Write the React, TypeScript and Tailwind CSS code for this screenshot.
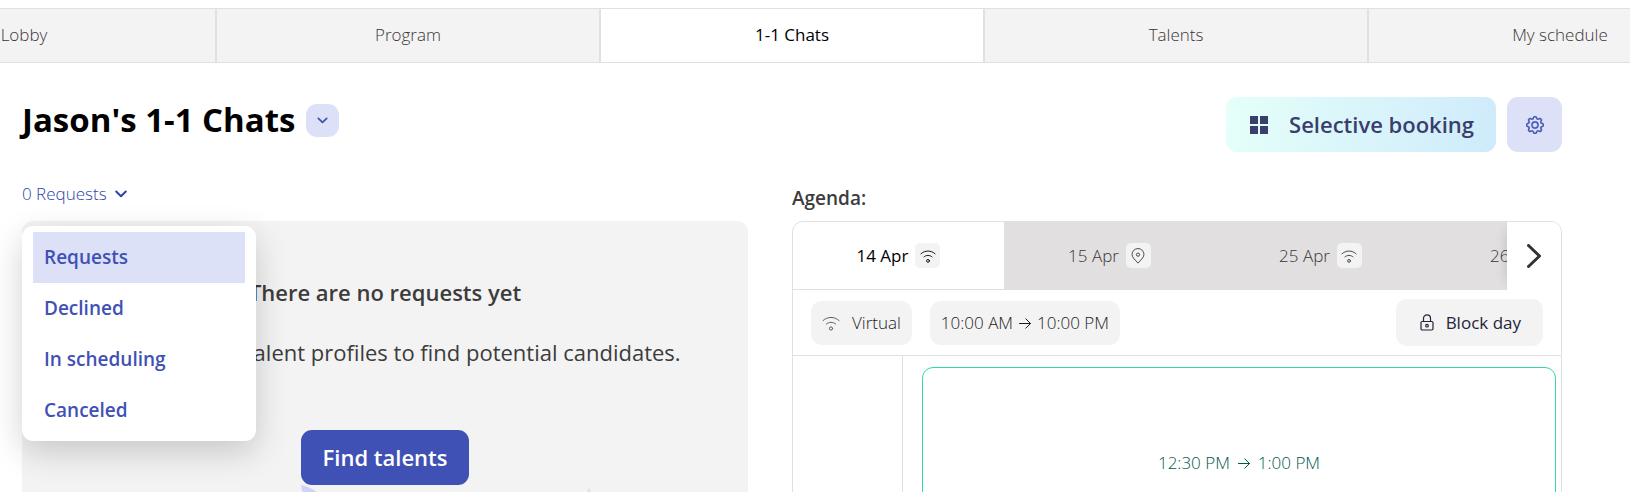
import React from 'react';

const tabs = ['Lobby', 'Program', '1-1 Chats', 'Talents', 'My schedule'];
const requestTypes = ['Requests', 'Declined', 'In scheduling', 'Canceled'];

const days = [
  { label: '14 Apr', virtual: true },
  { label: '15 Apr', virtual: false },
  { label: '25 Apr', virtual: true },
  { label: '26 Apr', virtual: true },
];

type IconProps = { className?: string };

const WifiIcon: React.FC<IconProps> = ({ className }) => (
  <svg viewBox="0 0 18 18" className={className} fill="none" stroke="currentColor" strokeLinecap="round">
    <path d="M1 6.600C5.500 2.300 12.500 2.300 17 6.600" />
    <path d="M4.400 10C7.200 7.700 10.800 7.700 13.600 10" />
    <circle cx="9" cy="14.500" r="1.600" />
  </svg>
);

const PinIcon: React.FC<IconProps> = ({ className }) => (
  <svg viewBox="0 0 18 18" className={className} fill="none" stroke="currentColor" strokeLinejoin="round">
    <path d="M9 17C6.500 14 2.300 10.800 2.300 7.300a6.700 6.700 0 0 1 13.400 0c0 3.500-4.200 6.700-6.700 9.700z" />
    <circle cx="9" cy="7.500" r="1.800" />
  </svg>
);

const ChevronIcon: React.FC<IconProps> = ({ className }) => (
  <svg viewBox="0 0 12 8" className={className} fill="none" stroke="currentColor" strokeWidth="2" strokeLinecap="round" strokeLinejoin="round">
    <path d="M1.200 1.500L6 6.200l4.800-4.700" />
  </svg>
);

const ArrowIcon: React.FC<IconProps> = ({ className }) => (
  <svg viewBox="0 0 12 12" className={className} fill="none" stroke="currentColor" strokeLinecap="round" strokeLinejoin="round">
    <path d="M.5 6.500h11M6.800 1.800L11.500 6.500l-4.700 4.700" />
  </svg>
);

const GridIcon: React.FC<IconProps> = ({ className }) => (
  <svg viewBox="0 0 18 18" className={className} fill="currentColor">
    <path d="M0 0h8v8H0zM10 0h8v8h-8zM0 10h8v8H0zM10 10h8v8h-8z" />
  </svg>
);

const GearIcon: React.FC<IconProps> = ({ className }) => (
  <svg viewBox="0 0 16 16" className={className} fill="currentColor" stroke="currentColor" strokeWidth=".4">
    <path d="M8 4.754a3.246 3.246 0 1 0 0 6.492 3.246 3.246 0 0 0 0-6.492M5.754 8a2.246 2.246 0 1 1 4.492 0 2.246 2.246 0 0 1-4.492 0" />
    <path d="M9.796 1.343c-.527-1.790-3.065-1.790-3.592 0l-.094.319a.873.873 0 0 1-1.255.52l-.292-.16c-1.640-.892-3.433.902-2.540 2.541l.159.292a.873.873 0 0 1-.52 1.255l-.319.094c-1.790.527-1.790 3.065 0 3.592l.319.094a.873.873 0 0 1 .52 1.255l-.16.292c-.892 1.640.901 3.434 2.541 2.540l.292-.159a.873.873 0 0 1 1.255.52l.094.319c.527 1.790 3.065 1.790 3.592 0l.094-.319a.873.873 0 0 1 1.255-.52l.292.16c1.640.893 3.434-.902 2.540-2.541l-.159-.292a.873.873 0 0 1 .52-1.255l.319-.094c1.790-.527 1.790-3.065 0-3.592l-.319-.094a.873.873 0 0 1-.52-1.255l.16-.292c.893-1.640-.902-3.433-2.541-2.540l-.292.159a.873.873 0 0 1-1.255-.52zm-2.633.283c.246-.835 1.428-.835 1.674 0l.094.319a1.873 1.873 0 0 0 2.693 1.115l.291-.16c.764-.415 1.600.42 1.184 1.185l-.159.292a1.873 1.873 0 0 0 1.116 2.692l.318.094c.835.246.835 1.428 0 1.674l-.319.094a1.873 1.873 0 0 0-1.115 2.693l.16.291c.415.764-.42 1.600-1.185 1.184l-.291-.159a1.873 1.873 0 0 0-2.693 1.116l-.094.318c-.246.835-1.428.835-1.674 0l-.094-.319a1.873 1.873 0 0 0-2.692-1.115l-.292.16c-.764.415-1.600-.42-1.184-1.185l.159-.291A1.873 1.873 0 0 0 1.945 8.930l-.319-.094c-.835-.246-.835-1.428 0-1.674l.319-.094A1.873 1.873 0 0 0 3.060 4.377l-.16-.292c-.415-.764.42-1.600 1.185-1.184l.292.159a1.873 1.873 0 0 0 2.692-1.115z" />
  </svg>
);

const LockIcon: React.FC<IconProps> = ({ className }) => (
  <svg viewBox="0 0 14 17" className={className} fill="none" stroke="currentColor" strokeWidth="1.200">
    <rect x="1" y="7.500" width="12" height="8.500" rx="1.200" />
    <path d="M3.500 7.500V4.300a3.500 3.500 0 0 1 7 0v3.200" />
    <circle cx="7" cy="11.700" r="1.300" />
  </svg>
);

const Requests: React.FC = () => (
  <section className="relative pr-11">
    <button type="button" aria-expanded="true" className="flex h-[22px] items-center gap-2 text-[17px] font-light text-[#3043a8]">
      0 Requests
      <ChevronIcon className="h-2 w-3" />
    </button>

    {/* Type filter */}
    <ul className="absolute left-0 top-[43px] z-10 w-[234px] rounded-[11px] bg-white px-[11px] pb-[5px] pt-[6px] shadow-[0_11px_33px_rgba(0,0,0,0.18)]">
      {requestTypes.map((type, i) => (
        <li key={type}>
          <button
            type="button"
            className={`h-[51px] w-full px-[11px] text-left text-[19px] font-semibold text-[#3f51b5] ${i === 0 ? 'bg-[#dde1f8]' : ''}`}
          >
            {type}
          </button>
        </li>
      ))}
    </ul>

    <div className="mt-4 flex flex-col items-center rounded-[11px] bg-[#f3f3f3] pt-[55px] text-[22px] leading-[33px] text-[#3c3c3c]">
      <h2 className="font-semibold">There are no requests yet</h2>
      <p className="mt-[27px]">Check out new talent profiles to find potential candidates.</p>
      <a href="#talents" className="mt-[61px] flex h-[55px] items-center rounded-[11px] bg-[#3f51b5] px-[22px] font-semibold text-white">
        Find talents
      </a>
      <svg viewBox="0 0 440 160" className="h-40 w-[440px]">
        <path d="M136 0c8 1 20 9 34 20v30C154 38 138 18 136 0z" fill="#cfd3f6" />
        <path d="M424 2l3 8 8 3-8 3-3 8-3-8-8-3 8-3z" fill="#dde1f8" />
      </svg>
    </div>
  </section>
);

const Agenda: React.FC = () => (
  <section>
    <h2 className="flex h-[30px] items-center text-[19px] font-semibold text-[#3c3c3c]">Agenda:</h2>

    <div className="mt-2 overflow-hidden rounded-[11px] border border-[#e0e0e0]">
      {/* Days */}
      <div className="flex h-[68px] overflow-hidden">
        <div className="flex flex-1 overflow-hidden">
          {days.map((day, i) => (
            <button
              key={day.label}
              type="button"
              className={`flex w-[211px] shrink-0 items-center justify-center gap-[7px] border-b border-[#e0e0e0] text-[17px] ${
                i === 0 ? 'text-black' : 'bg-[#e1dfe0] font-light text-[#3a3637]'
              }`}
            >
              {day.label}
              <span className="flex size-[25px] items-center justify-center rounded-[5px] bg-[#f3f3f3]">
                {day.virtual ? <WifiIcon className="size-4" /> : <PinIcon className="size-4" />}
              </span>
            </button>
          ))}
        </div>
        <button
          type="button"
          aria-label="Next days"
          className="flex w-[54px] items-center justify-center bg-white text-[#333] shadow-[-8px_0_11px_-8px_rgba(0,0,0,0.15)]"
        >
          <svg viewBox="0 0 14 24" className="h-6 w-[14px]" fill="none" stroke="currentColor" strokeWidth="3" strokeLinecap="round" strokeLinejoin="round">
            <path d="M1.500 1.500L12.500 12l-11 10.500" />
          </svg>
        </button>
      </div>

      {/* Day details */}
      <div className="flex h-[66px] items-center gap-[18px] border-b border-[#e0e0e0] px-[18px] text-[17px] text-[#1c1c1c]">
        <div className="flex h-11 items-center gap-3 rounded-[11px] bg-[#f3f3f3] px-[11px] font-light">
          <WifiIcon className="size-[18px] text-[#5c5c5c]" />
          Virtual
        </div>
        <div className="flex h-11 items-center gap-1.5 rounded-[11px] bg-[#f3f3f3] px-[11px] font-light">
          10:00 AM
          <ArrowIcon className="size-3" />
          10:00 PM
        </div>
        <button type="button" className="ml-auto flex h-[47px] items-center gap-3 rounded-[11px] bg-[#f3f3f3] pl-6 pr-[22px] font-medium text-[#24243a]">
          <LockIcon className="h-[17px] w-[14px]" />
          Block day
        </button>
      </div>

      {/* Slots */}
      <div className="flex h-[480px]">
        <div className="w-[110px] border-r border-[#e0e0e0]" />
        <div className="flex-1 pl-[19px] pr-[5px] pt-[11px]">
          <div className="flex h-[192px] items-center justify-center gap-2 rounded-[11px] border border-[#34d9a8] text-[17px] font-light text-[#00594a]">
            12:30 PM
            <ArrowIcon className="size-3" />
            1:00 PM
          </div>
        </div>
      </div>
    </div>
  </section>
);

const App: React.FC = () => {
  return (
    <div className="h-screen overflow-hidden bg-white pt-2 font-['Open_Sans',sans-serif]">
      <nav className="flex justify-center overflow-hidden border-y border-[#e0e0e0] bg-[#f3f3f3] pr-[46px]">
        {tabs.map((tab) => (
          <a
            key={tab}
            href="#"
            className={`flex h-[53px] w-96 shrink-0 items-center justify-center border-x border-[#e0e0e0] pb-0.5 text-[17px] ${
              tab === '1-1 Chats' ? 'bg-white font-medium text-black' : 'font-light text-[#3a3637]'
            }`}
          >
            {tab}
          </a>
        ))}
      </nav>

      <main className="pl-[22px] pr-[68px] pt-[34px]">
        <header className="flex items-start justify-between">
          <div className="flex h-[47px] items-center gap-[11px]">
            <h1 className="pb-0.5 text-[33px] font-bold text-black">Jason's 1-1 Chats</h1>
            <button type="button" aria-label="Switch calendar" className="flex size-[33px] items-center justify-center rounded-[11px] bg-[#dde1f8] text-[#3f51b5]">
              <ChevronIcon className="h-[7px] w-[11px]" />
            </button>
          </div>
          <div className="flex gap-[11px]">
            <button
              type="button"
              className="flex h-[55px] items-center gap-[21px] rounded-[11px] bg-linear-100 from-[#e5fff9] to-[#cfebfb] pl-6 pr-[22px] text-[22px] font-semibold text-[#3a3e6c]"
            >
              <GridIcon className="size-[18px]" />
              Selective booking
            </button>
            <button type="button" aria-label="Settings" className="flex size-[55px] items-center justify-center rounded-[11px] bg-[#dde1f8] text-[#3f51b5]">
              <GearIcon className="size-[18px]" />
            </button>
          </div>
        </header>

        <div className="mt-[31px] grid grid-cols-2">
          <Requests />
          <Agenda />
        </div>
      </main>
    </div>
  );
};

export default App;
